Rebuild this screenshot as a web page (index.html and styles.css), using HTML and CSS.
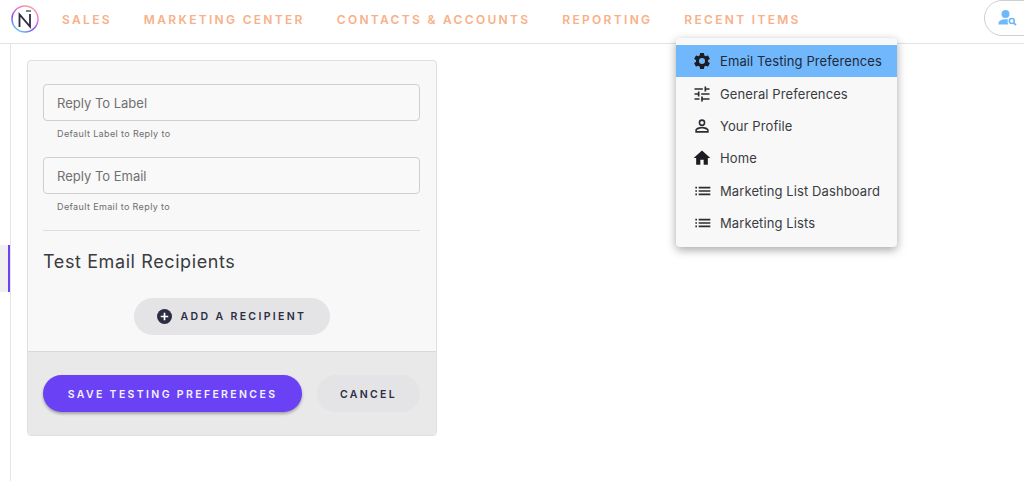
FILE: index.html
```html
<!DOCTYPE html>
<html lang="en">
  <head>
    <meta charset="UTF-8" />
    <title>Email Testing Preferences</title>
    <link rel="stylesheet" href="styles.css">
  </head>
  <body>
    <header class="top-bar">
      <svg class="logo" viewBox="0 0 28 28" width="28" height="28">
        <defs>
          <linearGradient id="ring" x1="0.900" y1="0" x2="0.300" y2="1">
            <stop offset="0" stop-color="#f9b08c" />
            <stop offset="0.4" stop-color="#ea72d8" />
            <stop offset="0.7" stop-color="#7a4cf0" />
            <stop offset="1" stop-color="#6fc0fb" />
          </linearGradient>
        </defs>
        <circle cx="14" cy="14" r="13" fill="#fff" stroke="url(#ring)" stroke-width="1.500" />
        <path d="M8.500 22V9.500L19 21.500V9" fill="none" stroke="#2b2d42" stroke-width="1.800" />
        <path d="M15 6h5" stroke="#2b2d42" stroke-width="1.200" />
      </svg>
      <nav class="main-nav">
        <a>Sales</a>
        <a>Marketing Center</a>
        <a>Contacts &amp; Accounts</a>
        <a>Reporting</a>
        <a>Recent Items</a>
      </nav>
      <button class="user-search">
        <svg viewBox="0 0 20 18" width="20" height="18">
          <circle cx="7.500" cy="5" r="4" fill="#6fb9fb" />
          <path d="M0.500 15.500v-1.500c0-2.500 4-3.800 7-3.800 1 0 1.800 0.100 2.600 0.300a5 5 0 0 0 0.200 5z" fill="#6fb9fb" />
          <circle cx="13.800" cy="12" r="2.500" fill="none" stroke="#6fb9fb" stroke-width="1.600" />
          <path d="M15.600 13.800l2.400 2.400" stroke="#6fb9fb" stroke-width="1.800" />
        </svg>
      </button>
    </header>

    <div class="content">
      <aside class="side-rail"><span class="rail-mark"></span></aside>
      <form class="card">
        <div class="card-body">
          <div class="field">
            <div class="input">Reply To Label</div>
            <p class="hint">Default Label to Reply to</p>
          </div>
          <div class="field">
            <div class="input">Reply To Email</div>
            <p class="hint">Default Email to Reply to</p>
          </div>
          <hr class="divider" />
          <h2>Test Email Recipients</h2>
          <div class="add-row">
            <button type="button" class="btn btn-add">
              <svg viewBox="0 0 16 16" width="15" height="15">
                <circle cx="8" cy="8" r="8" fill="#2b2d42" />
                <path d="M8 4v8M4 8h8" stroke="#fff" stroke-width="1.800" />
              </svg>
              Add a recipient
            </button>
          </div>
        </div>
        <div class="card-footer">
          <button type="button" class="btn btn-save">Save Testing Preferences</button>
          <button type="button" class="btn btn-cancel">Cancel</button>
        </div>
      </form>
    </div>

    <ul class="recent-menu">
      <li class="active">
        <svg viewBox="0 0 24 24" width="20" height="20"><path fill="#1c1c22" d="M19.140 12.940c.04-.3.060-.61.060-.94s-.020-.64-.070-.94l2.030-1.580a.49.49 0 0 0 .12-.61l-1.920-3.320a.49.49 0 0 0-.59-.22l-2.390.96a7 7 0 0 0-1.620-.94l-.36-2.540a.48.48 0 0 0-.48-.41h-3.840a.47.47 0 0 0-.47.41l-.36 2.540c-.59.24-1.130.57-1.620.94l-2.390-.96a.48.48 0 0 0-.59.22L2.740 8.870a.47.47 0 0 0 .12.61l2.030 1.580c-.05.3-.09.63-.09.94s.020.64.070.94l-2.030 1.580a.49.49 0 0 0-.12.61l1.920 3.320c.12.22.37.29.59.22l2.390-.96c.5.38 1.030.7 1.620.94l.36 2.540c.05.24.24.41.48.41h3.840c.24 0 .44-.17.47-.41l.36-2.540c.59-.24 1.130-.56 1.620-.94l2.390.96c.22.080.47 0 .59-.22l1.920-3.320a.47.47 0 0 0-.12-.61zM12 15.600a3.600 3.600 0 1 1 0-7.200 3.600 3.600 0 0 1 0 7.200z"/></svg>
        Email Testing Preferences
      </li>
      <li>
        <svg viewBox="0 0 24 24" width="20" height="20"><path fill="#2b2d33" d="M3 17v2h6v-2H3zM3 5v2h10V5H3zm10 16v-2h8v-2h-8v-2h-2v6h2zM7 9v2H3v2h4v2h2V9H7zm14 4v-2H11v2h10zm-6-4h2V7h4V5h-4V3h-2v6z"/></svg>
        General Preferences
      </li>
      <li>
        <svg viewBox="0 0 24 24" width="20" height="20"><path fill="#2b2d33" d="M12 5.900a2.100 2.100 0 1 1 0 4.200 2.100 2.100 0 0 1 0-4.200m0 9c2.970 0 6.100 1.460 6.100 2.100v1.100H5.900V17c0-.64 3.130-2.100 6.100-2.100M12 4a4 4 0 1 0 0 8 4 4 0 0 0 0-8zm0 9c-2.670 0-8 1.340-8 4v3h16v-3c0-2.660-5.330-4-8-4z"/></svg>
        Your Profile
      </li>
      <li>
        <svg viewBox="0 0 24 24" width="20" height="20"><path fill="#1c1c22" d="M10 20v-6h4v6h5v-8h3L12 3 2 12h3v8z"/></svg>
        Home
      </li>
      <li>
        <svg viewBox="0 0 24 24" width="20" height="20"><path fill="#2b2d33" d="M4 13h2v-2H4v2zm0 4h2v-2H4v2zm0-8h2V7H4v2zm4 4h14v-2H8v2zm0 4h14v-2H8v2zM8 7v2h14V7H8z"/></svg>
        Marketing List Dashboard
      </li>
      <li>
        <svg viewBox="0 0 24 24" width="20" height="20"><path fill="#2b2d33" d="M4 13h2v-2H4v2zm0 4h2v-2H4v2zm0-8h2V7H4v2zm4 4h14v-2H8v2zm0 4h14v-2H8v2zM8 7v2h14V7H8z"/></svg>
        Marketing Lists
      </li>
    </ul>
  </body>
</html>
```

FILE: styles.css
```css
/* Layout */
html,
body {
  margin: 0;
  padding: 0;
  height: 481px;
  overflow: hidden;
  background: #fff;
  font-family: Inter, "Liberation Sans", sans-serif;
  color: #2b2d33;
}
* {
  box-sizing: border-box;
}

/* Top bar */
.top-bar {
  height: 44px;
  display: flex;
  align-items: center;
  padding: 0 0 0 11px;
  border-bottom: 1px solid #e2e2e2;
  overflow: hidden;
}
.logo {
  flex: none;
  margin-top: -5px;
}
.main-nav {
  display: flex;
  gap: 32px;
  margin-left: 23px;
  margin-top: -5px;
  flex: 1;
  font-size: 12px;
  font-weight: 600;
  letter-spacing: 2.310px;
  text-transform: uppercase;
  color: #f8b088;
}
.user-search {
  width: 60px;
  height: 36px;
  margin-top: -7px;
  margin-right: -20px;
  padding: 3px 0 0 13px;
  text-align: left;
  background: #fff;
  border: 1px solid #cfcfcf;
  border-radius: 18px;
}

/* Content */
.content {
  display: flex;
  height: 437px;
}
.side-rail {
  width: 11px;
  flex: none;
  border-right: 1px solid #e4e4e4;
  padding-top: 201px;
}
.rail-mark {
  display: block;
  height: 47px;
  background: #f0f0f0;
  border-right: 2px solid #6a41f5;
}

/* Card */
.card {
  width: 410px;
  height: 376px;
  margin: 16px 0 0 16px;
  background: #f8f8f8;
  border: 1px solid #dfdfdf;
  border-radius: 4px;
  display: flex;
  flex-direction: column;
}
.card-body {
  height: 290px;
  padding: 23px 16px 0 15px;
}
.field {
  height: 73px;
}
.input {
  height: 37px;
  padding: 1px 13px 0;
  line-height: 35px;
  font-size: 13px;
  color: #707070;
  background: #f9f9f9;
  border: 1.500px solid #cfcfcf;
  border-radius: 4px;
}
.hint {
  margin: 6px 0 0 14px;
  font-size: 9px;
  line-height: 13px;
  letter-spacing: 0.380px;
  color: #6e6e6e;
}
.divider {
  margin: 0;
  border: none;
  border-top: 1px solid #dedede;
}
h2 {
  margin: 19px 0 0;
  font-size: 18px;
  line-height: 24px;
  font-weight: 400;
  letter-spacing: 0.600px;
  color: #3a3c40;
}
.add-row {
  display: flex;
  justify-content: center;
  margin-top: 24px;
}

/* Buttons */
.btn {
  height: 37px;
  border: none;
  border-radius: 19px;
  font-family: Inter, sans-serif;
  font-size: 10.500px;
  font-weight: 600;
  letter-spacing: 2.350px;
  text-transform: uppercase;
  color: #2b2d42;
  background: #e4e4e7;
}
.btn-add {
  width: 196px;
  display: flex;
  align-items: center;
  justify-content: center;
  gap: 9px;
}
.card-footer {
  flex: 1;
  display: flex;
  gap: 15px;
  align-items: flex-start;
  padding: 23px 16px 0 15px;
  background: #e9e9e9;
  border-top: 1px solid #d8d8d8;
  border-radius: 0 0 4px 4px;
}
.btn-save {
  width: 259px;
  padding-top: 3px;
  color: #f4f1ff;
  background: #6a41f5;
  box-shadow: 0 2px 3px rgba(0, 0, 0, 0.3);
}
.btn-cancel {
  width: 103px;
  padding-top: 3px;
}

/* Recent items menu */
.recent-menu {
  position: absolute;
  top: 38px;
  left: 676px;
  width: 221px;
  height: 209px;
  margin: 0;
  padding: 7px 0;
  list-style: none;
  background: #f8f8f8;
  border-radius: 4px;
  box-shadow: 0 3px 10px rgba(0, 0, 0, 0.35);
}
.recent-menu li {
  height: 32.400px;
  display: flex;
  align-items: center;
  gap: 8px;
  padding-left: 16px;
  font-size: 13px;
  letter-spacing: 0.100px;
  color: #3a3c42;
  white-space: nowrap;
}
.recent-menu li svg {
  flex: none;
}
.recent-menu li.active {
  background: #70b8fb;
  color: #22283a;
}
```
